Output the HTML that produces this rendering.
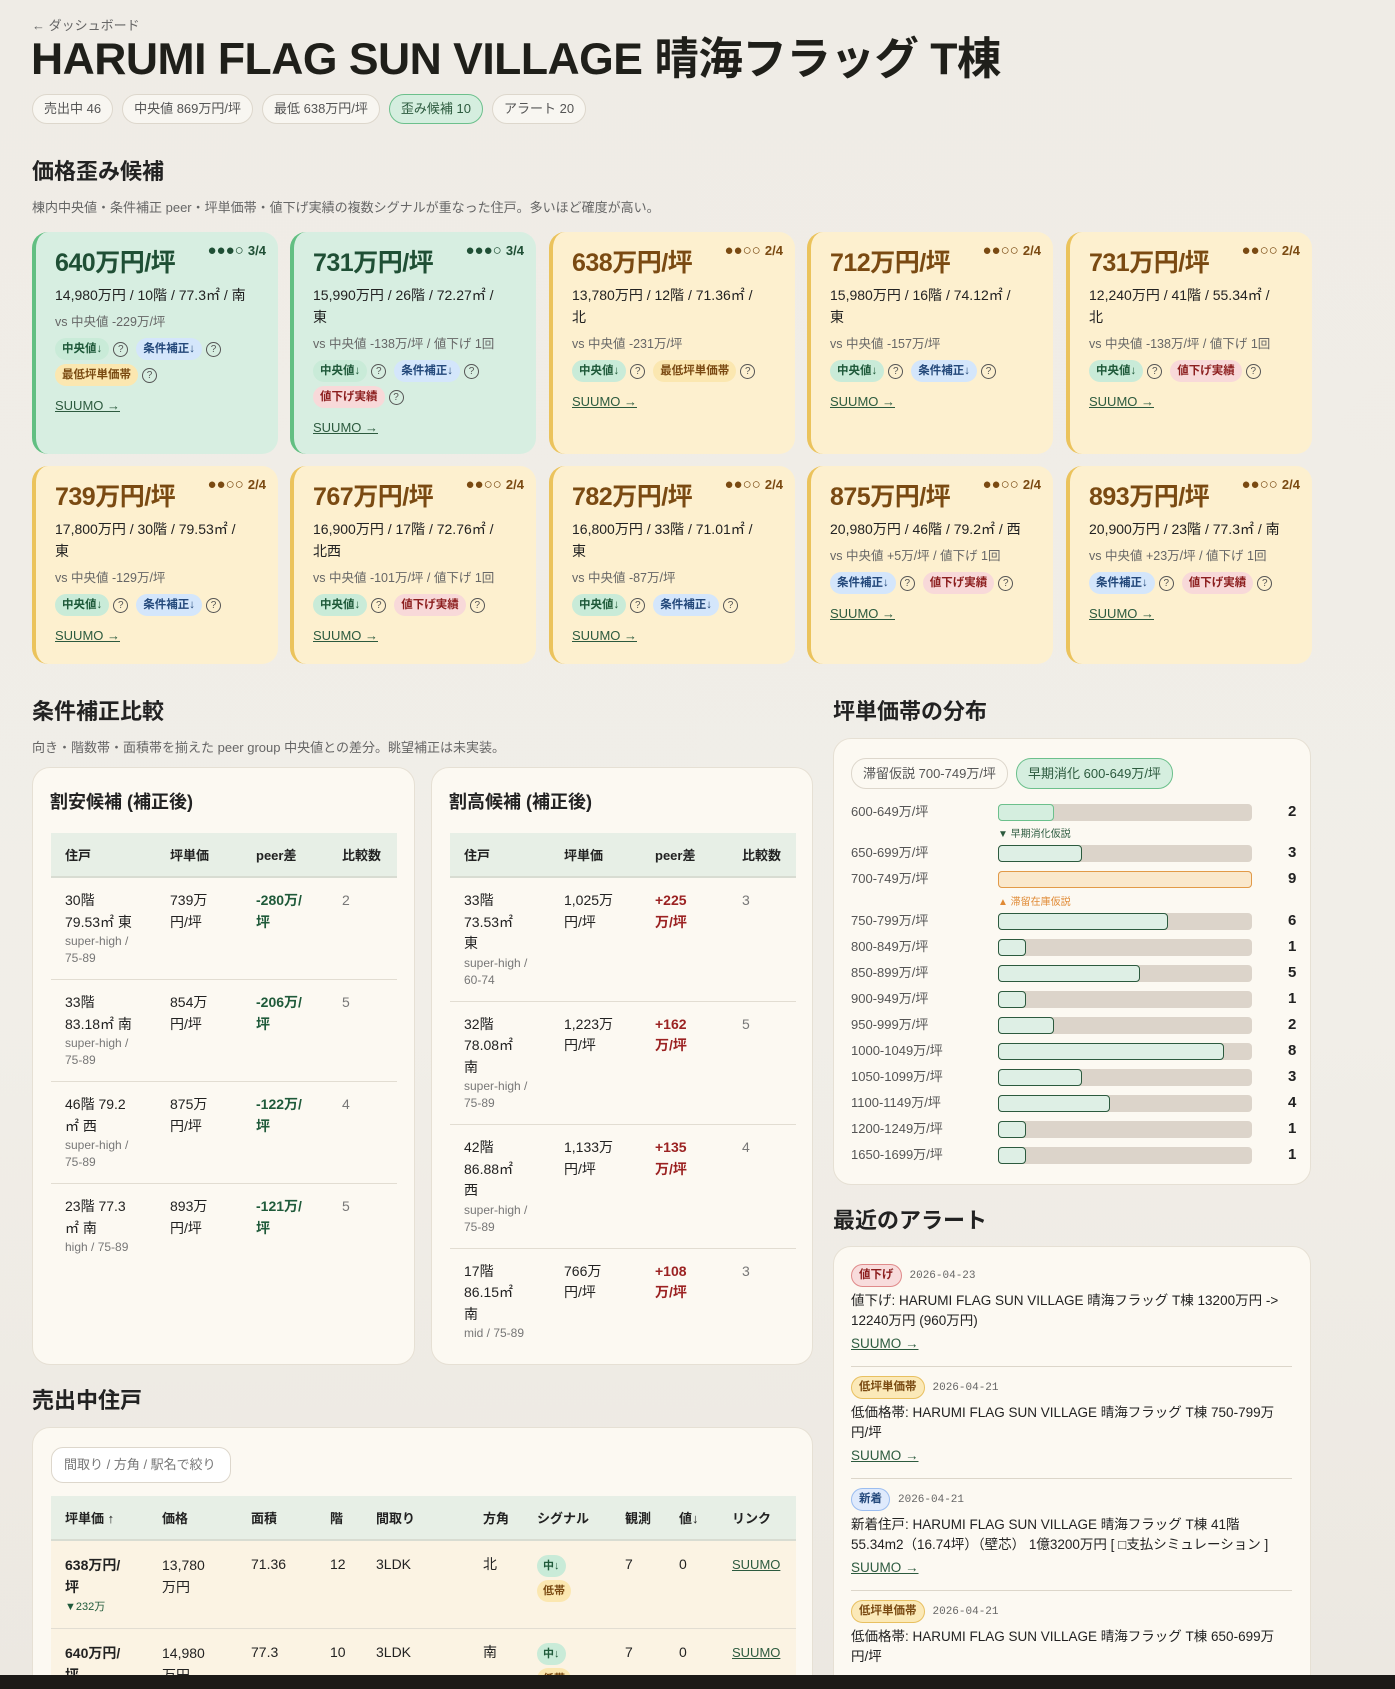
<!DOCTYPE html>
<html><head><meta charset="utf-8">
<style>
*{box-sizing:border-box;margin:0;padding:0}
html,body{width:1395px;height:1689px;overflow:hidden}
body{background:linear-gradient(180deg,#efece6,#f1eee8 60%,#ece8e1);font-family:"Liberation Sans","Noto Sans CJK JP",sans-serif;color:#222;position:relative}
.abs{position:absolute}
.back{left:32px;top:15px;font-size:13px;color:#666}
h1{position:absolute;left:31px;top:30px;font-size:44.5px;font-weight:700;color:#1f1f1a;letter-spacing:-0.5px;white-space:nowrap;line-height:60px}
.pills{left:32px;top:94px;display:flex;gap:9px}
.pill{height:30px;line-height:28px;border:1px solid #ddd7cc;background:#f8f6f1;border-radius:15px;padding:0 11px;font-size:13px;color:#555}
.pill.g{background:#d5eedf;border-color:#6cc08c;color:#2c5a3e}
h2{position:absolute;font-size:22px;font-weight:700;color:#222}
.desc{position:absolute;font-size:13px;color:#666}
.card{position:absolute;width:246px;border-radius:16px;padding:16px 14px 0 19px;border-left:4px solid}
.cg{background:#d7eee1;border-color:#62bf82}
.cy{background:#fdf0cf;border-color:#ebc35c}
.pr{font-size:25px;font-weight:700;line-height:30px;letter-spacing:-0.5px}
.cg .pr{color:#1f4f35}.cy .pr{color:#7a4a12}
.dots{position:absolute;right:12px;top:10px;font-size:15px;font-weight:700;letter-spacing:0}
.dots small{font-size:13px}
.cg .dots{color:#1f4f35}.cy .dots{color:#7a4a12}
.info{font-size:14px;line-height:22px;margin-top:6px;color:#222}
.vs{font-size:12.5px;color:#666;line-height:20px;margin-top:6px}
.bg{margin-top:6px;display:flex;flex-wrap:wrap;gap:4px 4px;align-items:center}
.b{display:inline-block;height:22px;line-height:22px;border-radius:11px;padding:0 7px;font-size:11.5px;font-weight:700}
.b1{background:#c9ebd8;color:#1f5a3a}.b2{background:#d4e6fb;color:#23487a}.b3{background:#fbe7b0;color:#7a4a12}.b4{background:#f8d9d9;color:#8c1e1e}
.q{display:inline-block;width:15px;height:15px;border:1px solid #555;border-radius:50%;font-size:10px;line-height:13px;text-align:center;color:#555;margin-right:4px}
.lnk{display:inline-block;margin-top:12px;font-size:13px;color:#2c5a3e;text-decoration:underline}
.panel{position:absolute;background:#fcf9f2;border:1px solid #e6e0d4;border-radius:18px}
.pt{position:absolute;left:17px;top:20px;font-size:18px;font-weight:700}
table{border-collapse:collapse;font-size:14px}
th{background:#e7efe6;text-align:left;font-size:13px;font-weight:700;height:44px;padding:0 14px;border-bottom:2px solid #d8dcd2}
td{vertical-align:top;padding:12px 14px;line-height:21.5px;border-bottom:1px solid #e2ddd2}
.sm{font-size:12px;color:#777;line-height:17px}
.neg{color:#1f5a3a;font-weight:700}.pos{color:#9b2222;font-weight:700}
.cnt{color:#777}
.row{position:absolute;left:17px;width:460px;height:18px;font-size:13px;color:#555}
.row .l{position:absolute;left:0;top:0;line-height:18px}
.row .bar{position:absolute;left:147px;top:1px;width:254px;height:17px;background:#dcd4ca;border-radius:4px}
.row .f{position:absolute;left:0;top:0;height:17px;background:#deefe5;border:1.5px solid #2c5a3e;border-radius:4px}
.row .n{position:absolute;left:437px;top:0;font-size:15px;font-weight:700;color:#222;line-height:18px}
.note{position:absolute;left:164px;font-size:10px}
.al{position:absolute;left:17px;width:441px;font-size:13.5px}
.al .tag{display:inline-block;height:23px;line-height:21px;border-radius:12px;padding:0 7px;font-size:11.5px;font-weight:700;border:1px solid}
.al .dt{font-family:"Liberation Mono",monospace;font-size:11px;color:#666;margin-left:8px}
.al .tx{margin-top:4px;line-height:20px;color:#222}
.al .lk{margin-top:3px;color:#2c5a3e;text-decoration:underline;line-height:20px}
.sep{position:absolute;left:17px;width:441px;border-top:1px solid #dcd6ca}
</style></head><body>
<div class="abs back">← ダッシュボード</div>
<h1>HARUMI FLAG SUN VILLAGE 晴海フラッグ T棟</h1>
<div class="abs pills"><span class="pill">売出中 46</span><span class="pill">中央値 869万円/坪</span><span class="pill">最低 638万円/坪</span><span class="pill g">歪み候補 10</span><span class="pill">アラート 20</span></div>

<h2 style="left:32px;top:154px">価格歪み候補</h2>
<div class="desc" style="left:32px;top:197px">棟内中央値・条件補正 peer・坪単価帯・値下げ実績の複数シグナルが重なった住戸。多いほど確度が高い。</div>

<!-- row 1 -->
<div class="card cg" style="left:32px;top:232px;height:222px"><div class="dots">●●●○ <small>3/4</small></div><div class="pr">640万円/坪</div><div class="info">14,980万円 / 10階 / 77.3㎡ / 南</div><div class="vs">vs 中央値 -229万/坪</div><div class="bg"><span class="b b1">中央値↓</span><span class="q">?</span><span class="b b2">条件補正↓</span><span class="q">?</span></div><div class="bg" style="margin-top:4px"><span class="b b3">最低坪単価帯</span><span class="q">?</span></div><a class="lnk">SUUMO →</a></div>
<div class="card cg" style="left:290px;top:232px;height:222px"><div class="dots">●●●○ <small>3/4</small></div><div class="pr">731万円/坪</div><div class="info">15,990万円 / 26階 / 72.27㎡ /<br>東</div><div class="vs">vs 中央値 -138万/坪 / 値下げ 1回</div><div class="bg"><span class="b b1">中央値↓</span><span class="q">?</span><span class="b b2">条件補正↓</span><span class="q">?</span></div><div class="bg" style="margin-top:4px"><span class="b b4">値下げ実績</span><span class="q">?</span></div><a class="lnk">SUUMO →</a></div>
<div class="card cy" style="left:549px;top:232px;height:222px"><div class="dots">●●○○ <small>2/4</small></div><div class="pr">638万円/坪</div><div class="info">13,780万円 / 12階 / 71.36㎡ /<br>北</div><div class="vs">vs 中央値 -231万/坪</div><div class="bg"><span class="b b1">中央値↓</span><span class="q">?</span><span class="b b3">最低坪単価帯</span><span class="q">?</span></div><a class="lnk">SUUMO →</a></div>
<div class="card cy" style="left:807px;top:232px;height:222px"><div class="dots">●●○○ <small>2/4</small></div><div class="pr">712万円/坪</div><div class="info">15,980万円 / 16階 / 74.12㎡ /<br>東</div><div class="vs">vs 中央値 -157万/坪</div><div class="bg"><span class="b b1">中央値↓</span><span class="q">?</span><span class="b b2">条件補正↓</span><span class="q">?</span></div><a class="lnk">SUUMO →</a></div>
<div class="card cy" style="left:1066px;top:232px;height:222px"><div class="dots">●●○○ <small>2/4</small></div><div class="pr">731万円/坪</div><div class="info">12,240万円 / 41階 / 55.34㎡ /<br>北</div><div class="vs">vs 中央値 -138万/坪 / 値下げ 1回</div><div class="bg"><span class="b b1">中央値↓</span><span class="q">?</span><span class="b b4">値下げ実績</span><span class="q">?</span></div><a class="lnk">SUUMO →</a></div>
<!-- row 2 -->
<div class="card cy" style="left:32px;top:466px;height:198px"><div class="dots">●●○○ <small>2/4</small></div><div class="pr">739万円/坪</div><div class="info">17,800万円 / 30階 / 79.53㎡ /<br>東</div><div class="vs">vs 中央値 -129万/坪</div><div class="bg"><span class="b b1">中央値↓</span><span class="q">?</span><span class="b b2">条件補正↓</span><span class="q">?</span></div><a class="lnk">SUUMO →</a></div>
<div class="card cy" style="left:290px;top:466px;height:198px"><div class="dots">●●○○ <small>2/4</small></div><div class="pr">767万円/坪</div><div class="info">16,900万円 / 17階 / 72.76㎡ /<br>北西</div><div class="vs">vs 中央値 -101万/坪 / 値下げ 1回</div><div class="bg"><span class="b b1">中央値↓</span><span class="q">?</span><span class="b b4">値下げ実績</span><span class="q">?</span></div><a class="lnk">SUUMO →</a></div>
<div class="card cy" style="left:549px;top:466px;height:198px"><div class="dots">●●○○ <small>2/4</small></div><div class="pr">782万円/坪</div><div class="info">16,800万円 / 33階 / 71.01㎡ /<br>東</div><div class="vs">vs 中央値 -87万/坪</div><div class="bg"><span class="b b1">中央値↓</span><span class="q">?</span><span class="b b2">条件補正↓</span><span class="q">?</span></div><a class="lnk">SUUMO →</a></div>
<div class="card cy" style="left:807px;top:466px;height:198px"><div class="dots">●●○○ <small>2/4</small></div><div class="pr">875万円/坪</div><div class="info">20,980万円 / 46階 / 79.2㎡ / 西</div><div class="vs">vs 中央値 +5万/坪 / 値下げ 1回</div><div class="bg"><span class="b b2">条件補正↓</span><span class="q">?</span><span class="b b4">値下げ実績</span><span class="q">?</span></div><a class="lnk">SUUMO →</a></div>
<div class="card cy" style="left:1066px;top:466px;height:198px"><div class="dots">●●○○ <small>2/4</small></div><div class="pr">893万円/坪</div><div class="info">20,900万円 / 23階 / 77.3㎡ / 南</div><div class="vs">vs 中央値 +23万/坪 / 値下げ 1回</div><div class="bg"><span class="b b2">条件補正↓</span><span class="q">?</span><span class="b b4">値下げ実績</span><span class="q">?</span></div><a class="lnk">SUUMO →</a></div>

<h2 style="left:32px;top:694px">条件補正比較</h2>
<div class="desc" style="left:32px;top:737px">向き・階数帯・面積帯を揃えた peer group 中央値との差分。眺望補正は未実装。</div>

<div class="panel" style="left:32px;top:767px;width:383px;height:598px">
<div class="pt">割安候補 (補正後)</div>
<table style="position:absolute;left:18px;top:65px;width:346px">
<tr><th style="width:105px">住戸</th><th style="width:86px">坪単価</th><th style="width:86px">peer差</th><th>比較数</th></tr>
<tr><td>30階<br>79.53㎡ 東<div class="sm">super-high /<br>75-89</div></td><td>739万<br>円/坪</td><td class="neg">-280万/<br>坪</td><td class="cnt">2</td></tr>
<tr><td>33階<br>83.18㎡ 南<div class="sm">super-high /<br>75-89</div></td><td>854万<br>円/坪</td><td class="neg">-206万/<br>坪</td><td class="cnt">5</td></tr>
<tr><td>46階 79.2<br>㎡ 西<div class="sm">super-high /<br>75-89</div></td><td>875万<br>円/坪</td><td class="neg">-122万/<br>坪</td><td class="cnt">4</td></tr>
<tr><td style="border:0">23階 77.3<br>㎡ 南<div class="sm">high / 75-89</div></td><td style="border:0">893万<br>円/坪</td><td class="neg" style="border:0">-121万/<br>坪</td><td class="cnt" style="border:0">5</td></tr>
</table></div>

<div class="panel" style="left:431px;top:767px;width:382px;height:598px">
<div class="pt">割高候補 (補正後)</div>
<table style="position:absolute;left:18px;top:65px;width:346px">
<tr><th style="width:100px">住戸</th><th style="width:91px">坪単価</th><th style="width:87px">peer差</th><th>比較数</th></tr>
<tr><td>33階<br>73.53㎡<br>東<div class="sm">super-high /<br>60-74</div></td><td>1,025万<br>円/坪</td><td class="pos">+225<br>万/坪</td><td class="cnt">3</td></tr>
<tr><td>32階<br>78.08㎡<br>南<div class="sm">super-high /<br>75-89</div></td><td>1,223万<br>円/坪</td><td class="pos">+162<br>万/坪</td><td class="cnt">5</td></tr>
<tr><td>42階<br>86.88㎡<br>西<div class="sm">super-high /<br>75-89</div></td><td>1,133万<br>円/坪</td><td class="pos">+135<br>万/坪</td><td class="cnt">4</td></tr>
<tr><td style="border:0">17階<br>86.15㎡<br>南<div class="sm">mid / 75-89</div></td><td style="border:0">766万<br>円/坪</td><td class="pos" style="border:0">+108<br>万/坪</td><td class="cnt" style="border:0">3</td></tr>
</table></div>

<h2 style="left:833px;top:694px">坪単価帯の分布</h2>
<div class="panel" style="left:833px;top:738px;width:478px;height:447px">
<span class="pill" style="position:absolute;left:17px;top:19px;height:31px;line-height:29px;background:#fcf9f2">滞留仮説 700-749万/坪</span>
<span class="pill g" style="position:absolute;left:182px;top:19px;height:31px;line-height:29px">早期消化 600-649万/坪</span>
<div class="row" style="top:64px"><span class="l">600-649万/坪</span><div class="bar"><div class="f" style="width:56px;border-color:#6cc08c;background:#d5eedf"></div></div><span class="n">2</span></div>
<div class="note" style="top:86px;color:#2c5a3e">▼ 早期消化仮説</div>
<div class="row" style="top:105px"><span class="l">650-699万/坪</span><div class="bar"><div class="f" style="width:84px"></div></div><span class="n">3</span></div>
<div class="row" style="top:131px"><span class="l">700-749万/坪</span><div class="bar"><div class="f" style="width:254px;background:#fae8cc;border-color:#e29a48"></div></div><span class="n">9</span></div>
<div class="note" style="top:154px;color:#e08a35">▲ 滞留在庫仮説</div>
<div class="row" style="top:173px"><span class="l">750-799万/坪</span><div class="bar"><div class="f" style="width:170px"></div></div><span class="n">6</span></div>
<div class="row" style="top:199px"><span class="l">800-849万/坪</span><div class="bar"><div class="f" style="width:28px"></div></div><span class="n">1</span></div>
<div class="row" style="top:225px"><span class="l">850-899万/坪</span><div class="bar"><div class="f" style="width:142px"></div></div><span class="n">5</span></div>
<div class="row" style="top:251px"><span class="l">900-949万/坪</span><div class="bar"><div class="f" style="width:28px"></div></div><span class="n">1</span></div>
<div class="row" style="top:277px"><span class="l">950-999万/坪</span><div class="bar"><div class="f" style="width:56px"></div></div><span class="n">2</span></div>
<div class="row" style="top:303px"><span class="l">1000-1049万/坪</span><div class="bar"><div class="f" style="width:226px"></div></div><span class="n">8</span></div>
<div class="row" style="top:329px"><span class="l">1050-1099万/坪</span><div class="bar"><div class="f" style="width:84px"></div></div><span class="n">3</span></div>
<div class="row" style="top:355px"><span class="l">1100-1149万/坪</span><div class="bar"><div class="f" style="width:112px"></div></div><span class="n">4</span></div>
<div class="row" style="top:381px"><span class="l">1200-1249万/坪</span><div class="bar"><div class="f" style="width:28px"></div></div><span class="n">1</span></div>
<div class="row" style="top:407px"><span class="l">1650-1699万/坪</span><div class="bar"><div class="f" style="width:28px"></div></div><span class="n">1</span></div>
</div>

<h2 style="left:833px;top:1203px">最近のアラート</h2>
<div class="panel" style="left:833px;top:1246px;width:478px;height:470px">
<div class="al" style="top:17px"><span class="tag" style="background:#f8dcdc;border-color:#e08a8a;color:#8c1e1e">値下げ</span><span class="dt">2026-04-23</span><div class="tx">値下げ: HARUMI FLAG SUN VILLAGE 晴海フラッグ T棟 13200万円 -&gt;<br>12240万円 (960万円)</div><div class="lk">SUUMO →</div></div>
<div class="sep" style="top:119px"></div>
<div class="al" style="top:129px"><span class="tag" style="background:#fbe9b8;border-color:#e8c060;color:#7a4a12">低坪単価帯</span><span class="dt">2026-04-21</span><div class="tx">低価格帯: HARUMI FLAG SUN VILLAGE 晴海フラッグ T棟 750-799万<br>円/坪</div><div class="lk">SUUMO →</div></div>
<div class="sep" style="top:231px"></div>
<div class="al" style="top:241px"><span class="tag" style="background:#dfeafc;border-color:#9bbdf0;color:#23487a">新着</span><span class="dt">2026-04-21</span><div class="tx">新着住戸: HARUMI FLAG SUN VILLAGE 晴海フラッグ T棟 41階<br>55.34m2（16.74坪）（壁芯） 1億3200万円 [ □支払シミュレーション ]</div><div class="lk">SUUMO →</div></div>
<div class="sep" style="top:343px"></div>
<div class="al" style="top:353px"><span class="tag" style="background:#fbe9b8;border-color:#e8c060;color:#7a4a12">低坪単価帯</span><span class="dt">2026-04-21</span><div class="tx">低価格帯: HARUMI FLAG SUN VILLAGE 晴海フラッグ T棟 650-699万<br>円/坪</div></div>
</div>

<h2 style="left:32px;top:1383px">売出中住戸</h2>
<div class="panel" style="left:32px;top:1427px;width:781px;height:300px">
<div style="position:absolute;left:18px;top:19px;width:180px;height:36px;border:1px solid #ddd7cc;border-radius:12px;background:#fff;font-size:13px;color:#777;line-height:34px;padding-left:12px">間取り / 方角 / 駅名で絞り</div>
<table style="position:absolute;left:18px;top:68px;width:745px;font-size:14px">
<tr><th style="width:97px">坪単価 ↑</th><th style="width:89px">価格</th><th style="width:79px">面積</th><th style="width:46px">階</th><th style="width:107px">間取り</th><th style="width:54px">方角</th><th style="width:88px">シグナル</th><th style="width:54px">観測</th><th style="width:53px">値↓</th><th>リンク</th></tr>
<tr style="background:#fbf3e3"><td style="font-weight:700;line-height:22px;padding-top:13px">638万円/<br>坪<div style="font-size:11px;color:#1f5a3a;font-weight:400;line-height:18px">▼232万</div></td><td style="padding-top:13px;line-height:22px">13,780<br>万円</td><td style="padding-top:13px">71.36</td><td style="padding-top:13px">12</td><td style="padding-top:13px">3LDK</td><td style="padding-top:13px">北</td><td style="padding-top:13px"><span class="b b1" style="font-size:11px;padding:0 6px">中↓</span><br><span class="b b3" style="font-size:11px;padding:0 6px;margin-top:3px">低帯</span></td><td style="padding-top:13px">7</td><td style="padding-top:13px">0</td><td style="padding-top:13px;color:#2c5a3e;text-decoration:underline;font-size:13px">SUUMO</td></tr>
<tr style="background:#fbf3e3"><td style="font-weight:700;line-height:22px;padding-top:13px">640万円/<br>坪</td><td style="padding-top:13px;line-height:22px">14,980<br>万円</td><td style="padding-top:13px">77.3</td><td style="padding-top:13px">10</td><td style="padding-top:13px">3LDK</td><td style="padding-top:13px">南</td><td style="padding-top:13px"><span class="b b1" style="font-size:11px;padding:0 6px">中↓</span><br><span class="b b3" style="font-size:11px;padding:0 6px;margin-top:3px">低帯</span></td><td style="padding-top:13px">7</td><td style="padding-top:13px">0</td><td style="padding-top:13px;color:#2c5a3e;text-decoration:underline;font-size:13px">SUUMO</td></tr>
</table></div>

<div style="position:absolute;left:0;top:1675px;width:1395px;height:14px;background:#1c1a17"></div>
</body></html>
